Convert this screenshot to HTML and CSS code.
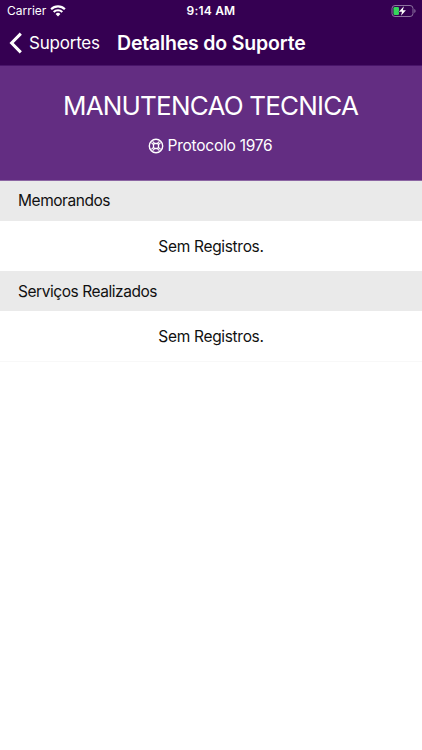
FILE: index.html
```html
<!DOCTYPE html>
<html lang="pt-BR">
<head>
<meta charset="utf-8">
<meta name="viewport" content="width=device-width, initial-scale=1">
<title>Detalhes do Suporte</title>
<link rel="stylesheet" href="styles.css">
</head>
<body>
<div class="status-bar">
  <div class="carrier">
    <span>Carrier</span>
    <svg class="wifi" viewBox="0 0 16 12" aria-hidden="true">
      <path d="M1.1 4.3a9.7 9.7 0 0 1 13.8 0M3.7 7a6.1 6.1 0 0 1 8.6 0" fill="none" stroke="#fff" stroke-width="2.1"/>
      <path d="M5.6 9a3.4 3.4 0 0 1 4.8 0L8 11.5z" fill="#fff"/>
    </svg>
  </div>
  <span class="time">9:14 AM</span>
  <svg class="battery" viewBox="0 0 26 12" aria-hidden="true">
    <rect x="1" y=".5" width="21" height="11" rx="3" fill="none" stroke="#8c729f"/>
    <path d="M23.3 4v4q1.3-.7 1.3-2t-1.3-2z" fill="#8c729f"/>
    <rect x="2.5" y="2" width="5.5" height="8" rx="1.3" fill="#35d65b"/>
    <path d="M12.9 1.3 7.9 6.7h3.1L10 10.8l4.9-5.5h-3.1z" fill="#fff" stroke="#350052" stroke-width="1" paint-order="stroke"/>
  </svg>
</div>
<header class="nav-bar">
  <a class="back">
    <svg class="chevron" viewBox="0 0 13 22" aria-hidden="true"><path d="M11.8 1.6 2.6 11l9.2 9.4" fill="none" stroke="#fff" stroke-width="3"/></svg>
    <span>Suportes</span>
  </a>
  <h1 class="title">Detalhes do Suporte</h1>
</header>
<main>
  <section class="hero">
    <h2 class="subject">MANUTENCAO TECNICA</h2>
    <p class="protocol">
      <svg class="buoy" viewBox="0 0 16 16" fill="none" stroke="#fff" aria-hidden="true">
        <circle cx="8" cy="8" r="6.7" stroke-width="1.4"/>
        <rect x="5.5" y="5.5" width="5" height="5" rx="1.4" stroke-width="1.3"/>
        <path d="m3.4 4.6 2.3 2.3M4.6 3.4l2.3 2.3M11.4 3.4 9.1 5.7M12.6 4.6l-2.3 2.3M3.4 11.4l2.3-2.3M4.6 12.6l2.3-2.3M11.4 12.6l-2.3-2.3M12.6 11.4l-2.3-2.3" stroke-width="1.1"/>
      </svg>
      <span>Protocolo 1976</span>
    </p>
  </section>
  <section>
    <h3 class="section-title">Memorandos</h3>
    <p class="empty"><span>Sem Registros.</span></p>
  </section>
  <section>
    <h3 class="section-title services">Serviços Realizados</h3>
    <p class="empty last"><span>Sem Registros.</span></p>
  </section>
</main>
</body>
</html>
```
FILE: styles.css
```css
* { box-sizing: border-box; }
body {
  margin: 0;
  background: #fff;
  color: #111;
  font-family: Inter, "Liberation Sans", sans-serif;
}
h1, h2, h3, p { margin: 0; font-weight: 400; }
svg { display: block; flex: none; }
.status-bar {
  display: grid;
  grid-template-columns: 1fr auto 1fr;
  align-items: center;
  height: 22px;
  padding: 0 5px 0 7px;
  background: #350052;
  color: #fff;
  font-size: 12px;
  line-height: 22px;
}
.carrier { display: flex; align-items: center; gap: 4px; }
.wifi { width: 16px; height: 12px; }
.time { margin-right: 2px; font-weight: 600; letter-spacing: .2px; }
.battery { width: 26px; height: 12px; justify-self: end; }
.nav-bar {
  display: flex;
  align-items: center;
  height: 44px;
  padding: 0 0 1px 9px;
  background: #350052;
  color: #fff;
  border-bottom: 1px solid #49146a;
}
.back { display: flex; align-items: center; gap: 7px; width: 108px; font-size: 17px; letter-spacing: -.22px; white-space: nowrap; }
.chevron { width: 13px; height: 22px; }
.title { font-size: 19.5px; font-weight: 600; letter-spacing: -.18px; white-space: nowrap; }
.hero {
  display: flex;
  flex-direction: column;
  align-items: center;
  height: 115px;
  padding-top: 23px;
  background: #632d82;
  color: #fff;
  border-bottom: 1px solid #8c66a3;
}
.subject { font-size: 26px; line-height: 34px; letter-spacing: -.8px; padding-right: 1px; white-space: nowrap; }
.protocol { display: flex; align-items: center; gap: 4px; margin-top: 13px; padding-right: 2px; font-size: 15.5px; line-height: 20px; letter-spacing: -.24px; }
.buoy { width: 16px; height: 16px; }
.section-title {
  height: 40px;
  padding-left: 18px;
  background: #eaeaea;
  font-size: 15.5px;
  line-height: 40px;
  letter-spacing: -.45px;
}
.services { line-height: 41px; }
.empty { height: 50px; font-size: 15.5px; line-height: 51px; text-align: center; letter-spacing: -.32px; }
.last { height: 51px; line-height: 52px; border-bottom: 1px solid #f8f8f8; }
```
